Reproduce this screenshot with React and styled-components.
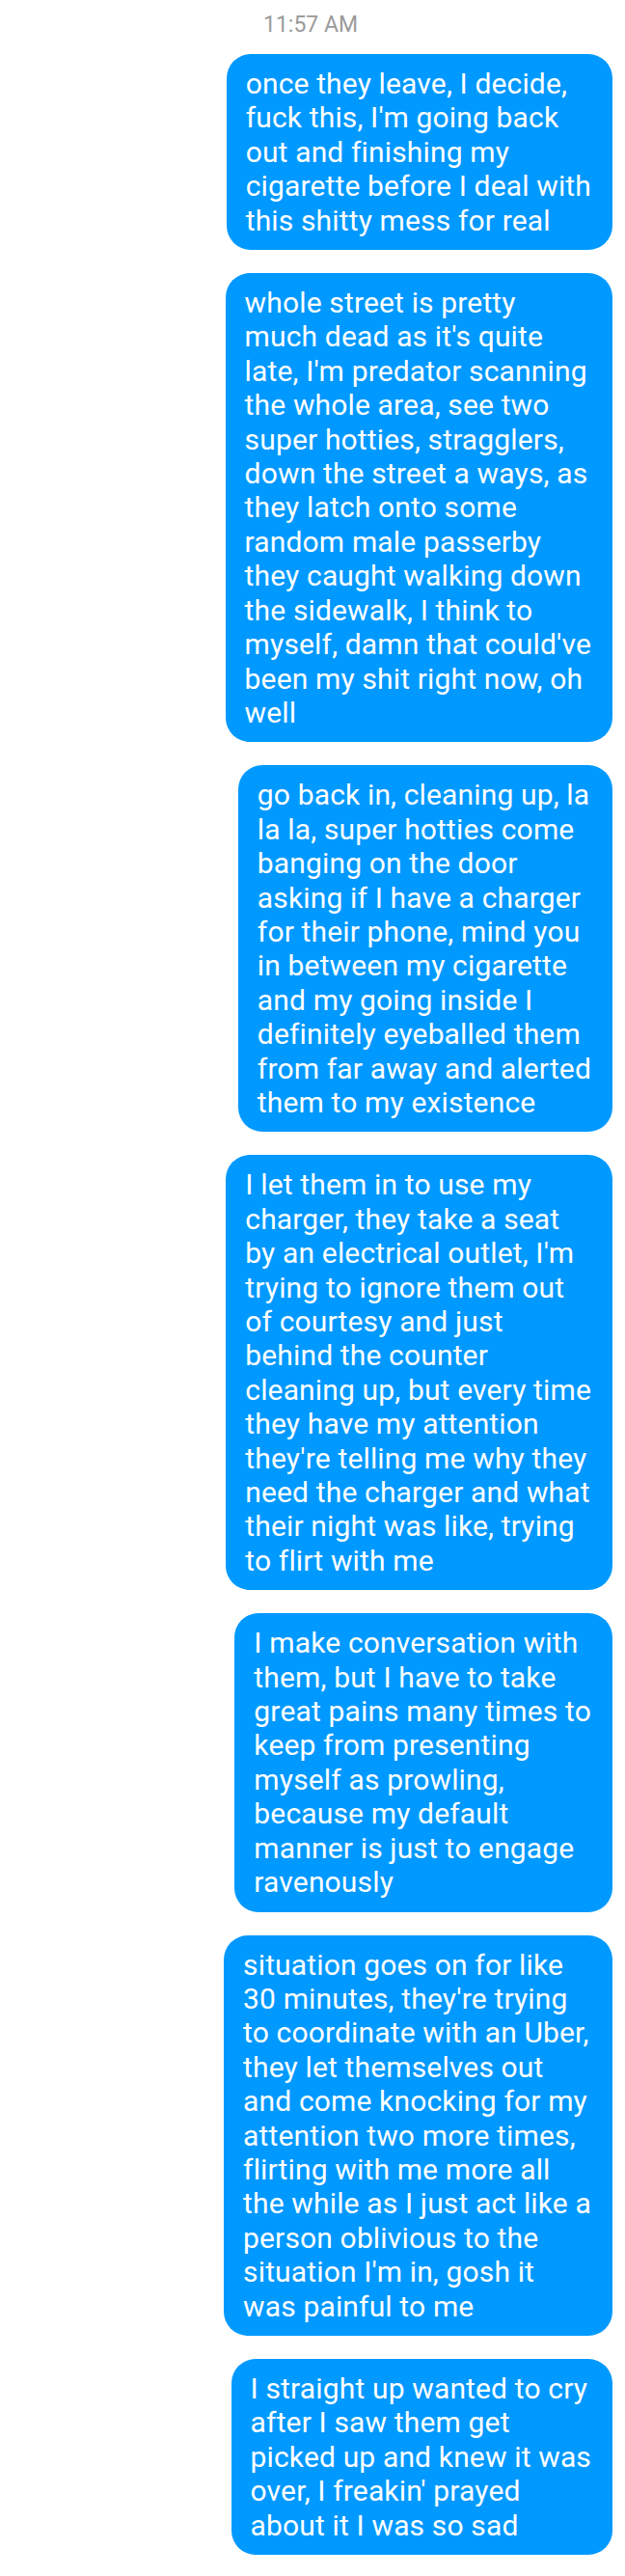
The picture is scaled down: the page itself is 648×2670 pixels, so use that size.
import React from 'react';
import styled, { createGlobalStyle } from 'styled-components';

const GlobalStyle = createGlobalStyle`
  body {
    margin: 0;
    background: #fff;
    font-family: Roboto, 'Noto Sans', sans-serif;
  }
`;

const Thread = styled.div`
  width: 648px;
  min-height: 2670px;
  box-sizing: border-box;
  padding: 12px 13px 20px 0;
  display: flex;
  flex-direction: column;
  align-items: flex-end;
  gap: 24px;
`;

const Timestamp = styled.div`
  align-self: flex-start;
  margin-left: 273px;
  margin-bottom: -8px;
  font-size: 23px;
  line-height: 28px;
  color: #9a9a9a;
`;

const Bubble = styled.div`
  background: #0099ff;
  color: #fff;
  border-radius: 25px;
  padding: 13px 22px 13px 20px;
  font-size: 30px;
  line-height: 35.4px;
  letter-spacing: 0.15px;
`;

const Line = styled.span`
  display: block;
  white-space: nowrap;
`;

const messages = [
  [
    'once they leave, I decide,',
    "fuck this, I'm going back",
    'out and finishing my',
    'cigarette before I deal with',
    'this shitty mess for real',
  ],
  [
    'whole street is pretty',
    "much dead as it's quite",
    "late, I'm predator scanning",
    'the whole area, see two',
    'super hotties, stragglers,',
    'down the street a ways, as',
    'they latch onto some',
    'random male passerby',
    'they caught walking down',
    'the sidewalk, I think to',
    "myself, damn that could've",
    'been my shit right now, oh',
    'well',
  ],
  [
    'go back in, cleaning up, la',
    'la la, super hotties come',
    'banging on the door',
    'asking if I have a charger',
    'for their phone, mind you',
    'in between my cigarette',
    'and my going inside I',
    'definitely eyeballed them',
    'from far away and alerted',
    'them to my existence',
  ],
  [
    'I let them in to use my',
    'charger, they take a seat',
    "by an electrical outlet, I'm",
    'trying to ignore them out',
    'of courtesy and just',
    'behind the counter',
    'cleaning up, but every time',
    'they have my attention',
    "they're telling me why they",
    'need the charger and what',
    'their night was like, trying',
    'to flirt with me',
  ],
  [
    'I make conversation with',
    'them, but I have to take',
    'great pains many times to',
    'keep from presenting',
    'myself as prowling,',
    'because my default',
    'manner is just to engage',
    'ravenously',
  ],
  [
    'situation goes on for like',
    "30 minutes, they're trying",
    'to coordinate with an Uber,',
    'they let themselves out',
    'and come knocking for my',
    'attention two more times,',
    'flirting with me more all',
    'the while as I just act like a',
    'person oblivious to the',
    "situation I'm in, gosh it",
    'was painful to me',
  ],
  [
    'I straight up wanted to cry',
    'after I saw them get',
    'picked up and knew it was',
    "over, I freakin' prayed",
    'about it I was so sad',
  ],
];

function App() {
  return (
    <>
      <GlobalStyle />
      <Thread>
        <Timestamp>11:57 AM</Timestamp>
        {messages.map((lines, i) => (
          <Bubble key={i}>
            {lines.map((line, j) => (
              <Line key={j}>{line}</Line>
            ))}
          </Bubble>
        ))}
      </Thread>
    </>
  );
}

export default App;
